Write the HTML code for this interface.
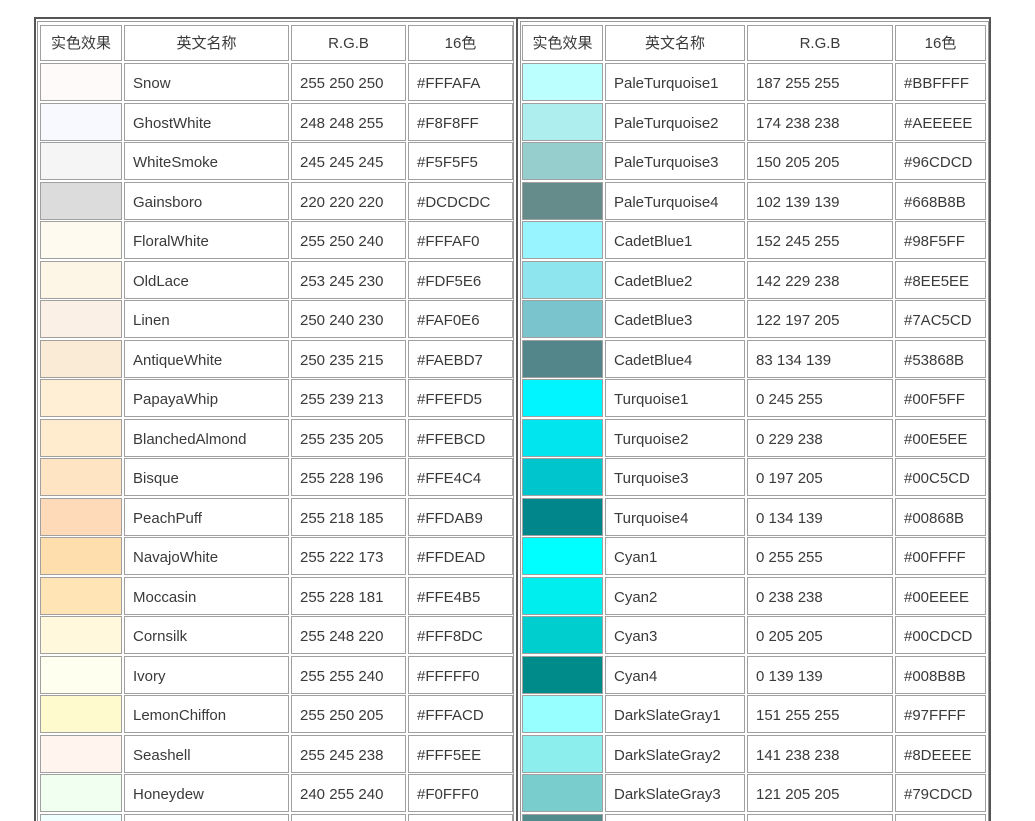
<!DOCTYPE html>
<html style="overflow:hidden;height:821px"><head><meta charset="utf-8"><style>
body{margin:0;width:1035px;height:821px;overflow:hidden;background:#fff;position:relative;font-family:"Liberation Sans","Noto Sans CJK SC",sans-serif;font-size:15px;color:#3a3a3a}
.f{position:absolute;box-sizing:border-box}
.r{position:absolute;left:0;width:1035px;height:38px}
.r div{position:absolute;top:0;height:100%;box-sizing:border-box;border:1px solid #a0a0a0;line-height:39px;padding-left:8px;white-space:nowrap}
.h div{text-align:center;padding-left:0;line-height:36px}
.a{left:40px;width:82px}.b{left:124px;width:165px}.c{left:291px;width:115px}.d{left:408px;width:105px}
.e{left:522px;width:81px}.g{left:605px;width:140px}.i{left:747px;width:146px}.j{left:895px;width:91px}
</style></head><body>
<div class="f" style="left:34px;top:17px;width:957px;height:810px;border:2px solid #555;border-bottom:none"></div>
<div class="f" style="left:37px;top:21px;width:477px;height:805px;border:1px solid #999;border-bottom:none"></div>
<div class="f" style="left:516px;top:19px;width:2px;height:805px;background:#555"></div>
<div class="f" style="left:520px;top:21px;width:469px;height:805px;border:1px solid #999;border-bottom:none"></div>
<div class="r h" style="top:25px;height:36px"><div class="a">实色效果</div><div class="b">英文名称</div><div class="c">R.G.B</div><div class="d">16色</div><div class="e">实色效果</div><div class="g">英文名称</div><div class="i">R.G.B</div><div class="j">16色</div></div>
<div class="r" style="top:63px"><div class="a" style="background:#FFFAFA"></div><div class="b">Snow</div><div class="c">255 250 250</div><div class="d">#FFFAFA</div><div class="e" style="background:#BBFFFF"></div><div class="g">PaleTurquoise1</div><div class="i">187 255 255</div><div class="j">#BBFFFF</div></div>
<div class="r" style="top:103px"><div class="a" style="background:#F8F8FF"></div><div class="b">GhostWhite</div><div class="c">248 248 255</div><div class="d">#F8F8FF</div><div class="e" style="background:#AEEEEE"></div><div class="g">PaleTurquoise2</div><div class="i">174 238 238</div><div class="j">#AEEEEE</div></div>
<div class="r" style="top:142px"><div class="a" style="background:#F5F5F5"></div><div class="b">WhiteSmoke</div><div class="c">245 245 245</div><div class="d">#F5F5F5</div><div class="e" style="background:#96CDCD"></div><div class="g">PaleTurquoise3</div><div class="i">150 205 205</div><div class="j">#96CDCD</div></div>
<div class="r" style="top:182px"><div class="a" style="background:#DCDCDC"></div><div class="b">Gainsboro</div><div class="c">220 220 220</div><div class="d">#DCDCDC</div><div class="e" style="background:#668B8B"></div><div class="g">PaleTurquoise4</div><div class="i">102 139 139</div><div class="j">#668B8B</div></div>
<div class="r" style="top:221px"><div class="a" style="background:#FFFAF0"></div><div class="b">FloralWhite</div><div class="c">255 250 240</div><div class="d">#FFFAF0</div><div class="e" style="background:#98F5FF"></div><div class="g">CadetBlue1</div><div class="i">152 245 255</div><div class="j">#98F5FF</div></div>
<div class="r" style="top:261px"><div class="a" style="background:#FDF5E6"></div><div class="b">OldLace</div><div class="c">253 245 230</div><div class="d">#FDF5E6</div><div class="e" style="background:#8EE5EE"></div><div class="g">CadetBlue2</div><div class="i">142 229 238</div><div class="j">#8EE5EE</div></div>
<div class="r" style="top:300px"><div class="a" style="background:#FAF0E6"></div><div class="b">Linen</div><div class="c">250 240 230</div><div class="d">#FAF0E6</div><div class="e" style="background:#7AC5CD"></div><div class="g">CadetBlue3</div><div class="i">122 197 205</div><div class="j">#7AC5CD</div></div>
<div class="r" style="top:340px"><div class="a" style="background:#FAEBD7"></div><div class="b">AntiqueWhite</div><div class="c">250 235 215</div><div class="d">#FAEBD7</div><div class="e" style="background:#53868B"></div><div class="g">CadetBlue4</div><div class="i">83 134 139</div><div class="j">#53868B</div></div>
<div class="r" style="top:379px"><div class="a" style="background:#FFEFD5"></div><div class="b">PapayaWhip</div><div class="c">255 239 213</div><div class="d">#FFEFD5</div><div class="e" style="background:#00F5FF"></div><div class="g">Turquoise1</div><div class="i">0 245 255</div><div class="j">#00F5FF</div></div>
<div class="r" style="top:419px"><div class="a" style="background:#FFEBCD"></div><div class="b">BlanchedAlmond</div><div class="c">255 235 205</div><div class="d">#FFEBCD</div><div class="e" style="background:#00E5EE"></div><div class="g">Turquoise2</div><div class="i">0 229 238</div><div class="j">#00E5EE</div></div>
<div class="r" style="top:458px"><div class="a" style="background:#FFE4C4"></div><div class="b">Bisque</div><div class="c">255 228 196</div><div class="d">#FFE4C4</div><div class="e" style="background:#00C5CD"></div><div class="g">Turquoise3</div><div class="i">0 197 205</div><div class="j">#00C5CD</div></div>
<div class="r" style="top:498px"><div class="a" style="background:#FFDAB9"></div><div class="b">PeachPuff</div><div class="c">255 218 185</div><div class="d">#FFDAB9</div><div class="e" style="background:#00868B"></div><div class="g">Turquoise4</div><div class="i">0 134 139</div><div class="j">#00868B</div></div>
<div class="r" style="top:537px"><div class="a" style="background:#FFDEAD"></div><div class="b">NavajoWhite</div><div class="c">255 222 173</div><div class="d">#FFDEAD</div><div class="e" style="background:#00FFFF"></div><div class="g">Cyan1</div><div class="i">0 255 255</div><div class="j">#00FFFF</div></div>
<div class="r" style="top:577px"><div class="a" style="background:#FFE4B5"></div><div class="b">Moccasin</div><div class="c">255 228 181</div><div class="d">#FFE4B5</div><div class="e" style="background:#00EEEE"></div><div class="g">Cyan2</div><div class="i">0 238 238</div><div class="j">#00EEEE</div></div>
<div class="r" style="top:616px"><div class="a" style="background:#FFF8DC"></div><div class="b">Cornsilk</div><div class="c">255 248 220</div><div class="d">#FFF8DC</div><div class="e" style="background:#00CDCD"></div><div class="g">Cyan3</div><div class="i">0 205 205</div><div class="j">#00CDCD</div></div>
<div class="r" style="top:656px"><div class="a" style="background:#FFFFF0"></div><div class="b">Ivory</div><div class="c">255 255 240</div><div class="d">#FFFFF0</div><div class="e" style="background:#008B8B"></div><div class="g">Cyan4</div><div class="i">0 139 139</div><div class="j">#008B8B</div></div>
<div class="r" style="top:695px"><div class="a" style="background:#FFFACD"></div><div class="b">LemonChiffon</div><div class="c">255 250 205</div><div class="d">#FFFACD</div><div class="e" style="background:#97FFFF"></div><div class="g">DarkSlateGray1</div><div class="i">151 255 255</div><div class="j">#97FFFF</div></div>
<div class="r" style="top:735px"><div class="a" style="background:#FFF5EE"></div><div class="b">Seashell</div><div class="c">255 245 238</div><div class="d">#FFF5EE</div><div class="e" style="background:#8DEEEE"></div><div class="g">DarkSlateGray2</div><div class="i">141 238 238</div><div class="j">#8DEEEE</div></div>
<div class="r" style="top:774px"><div class="a" style="background:#F0FFF0"></div><div class="b">Honeydew</div><div class="c">240 255 240</div><div class="d">#F0FFF0</div><div class="e" style="background:#79CDCD"></div><div class="g">DarkSlateGray3</div><div class="i">121 205 205</div><div class="j">#79CDCD</div></div>
<div class="r" style="top:814px"><div class="a" style="background:#F0FFFF"></div><div class="b"></div><div class="c"></div><div class="d"></div><div class="e" style="background:#528B8B"></div><div class="g"></div><div class="i"></div><div class="j"></div></div>
</body></html>
